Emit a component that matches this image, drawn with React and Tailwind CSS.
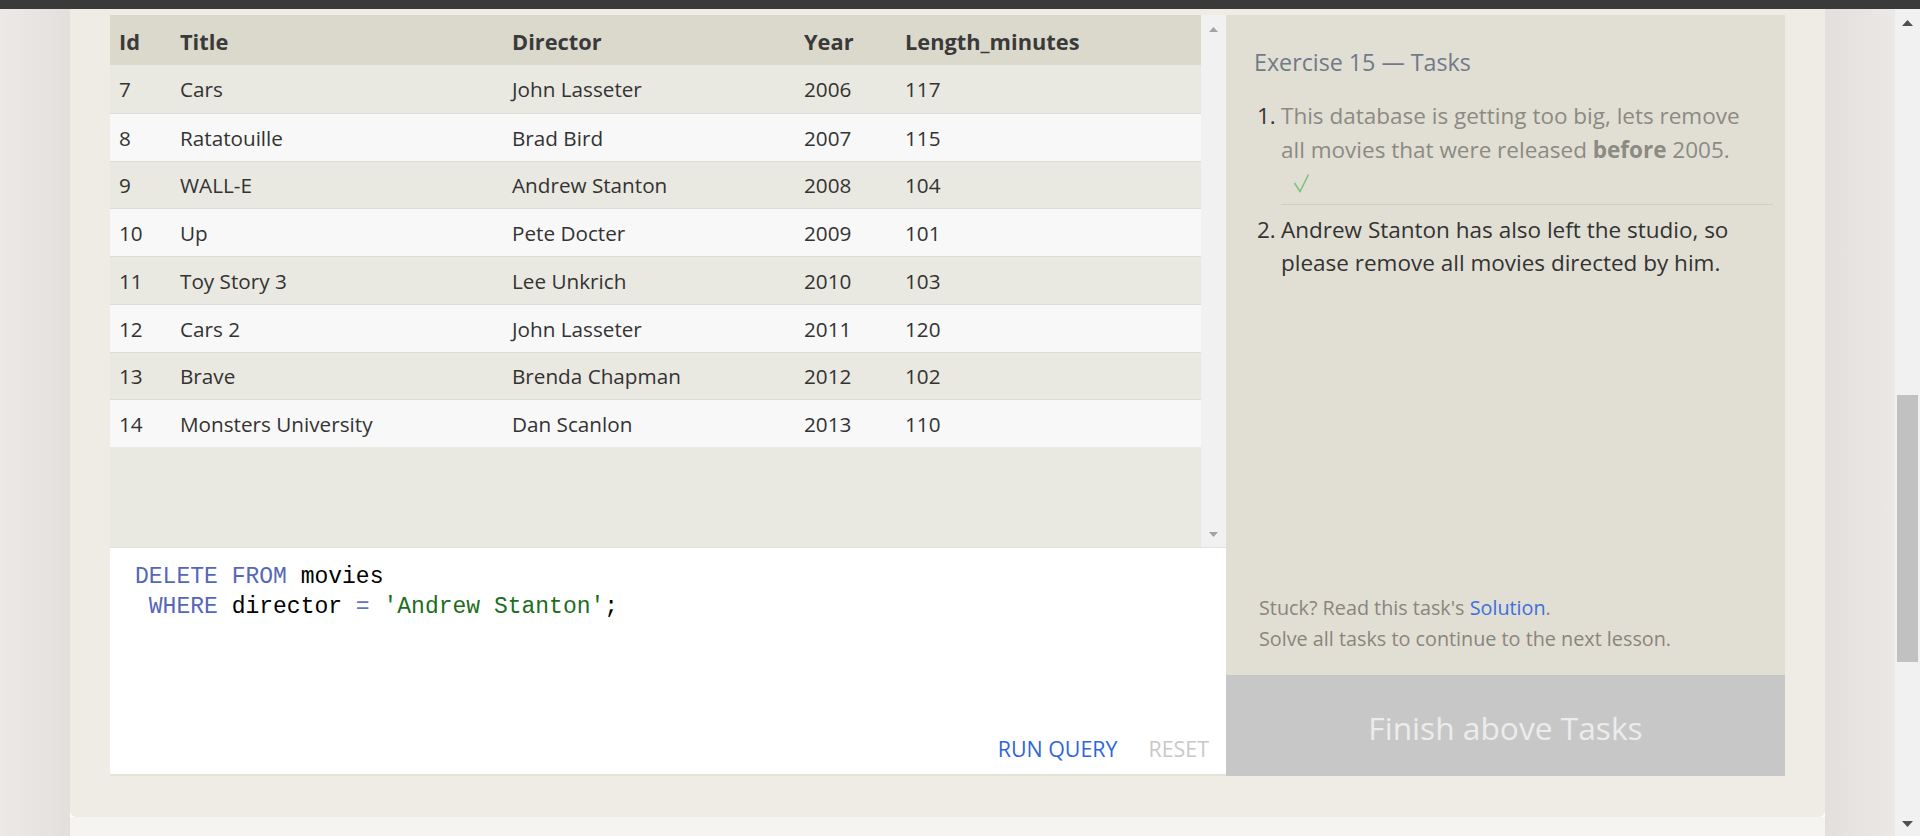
import React from "react";

const rows = [
  [7, "Cars", "John Lasseter", 2006, 117],
  [8, "Ratatouille", "Brad Bird", 2007, 115],
  [9, "WALL-E", "Andrew Stanton", 2008, 104],
  [10, "Up", "Pete Docter", 2009, 101],
  [11, "Toy Story 3", "Lee Unkrich", 2010, 103],
  [12, "Cars 2", "John Lasseter", 2011, 120],
  [13, "Brave", "Brenda Chapman", 2012, 102],
  [14, "Monsters University", "Dan Scanlon", 2013, 110],
];

function Cell({ children }) {
  return <div className="pl-[9px] whitespace-nowrap">{children}</div>;
}

function UpArrow({ color, w = 10, h = 5 }) {
  return (
    <svg width={w} height={h} viewBox={`0 0 ${w} ${h}`}>
      <polygon points={`0,${h} ${w / 2},0 ${w},${h}`} fill={color} />
    </svg>
  );
}
function DownArrow({ color, w = 10, h = 5 }) {
  return (
    <svg width={w} height={h} viewBox={`0 0 ${w} ${h}`}>
      <polygon points={`0,0 ${w},0 ${w / 2},${h}`} fill={color} />
    </svg>
  );
}

export default function App() {
  return (
    <div className="w-[1920px] h-[836px] overflow-hidden flex flex-col font-['Open_Sans',sans-serif] text-[#333333]">
      <div className="h-[9px] bg-[#3a3a3a] shrink-0" />
      <div className="flex flex-1 min-h-0">
        <div className="w-[70px] bg-linear-to-r from-[#ece9e6] to-[#e3dfdc]" />
        <div className="w-[1755px] flex flex-col">
          <div className="h-[808px] bg-[#efece5] rounded-b-[6px] px-[40px] pt-[6px] flex">
            {/* left: table + editor */}
            <div className="w-[1116px] flex flex-col">
              <div className="h-[532px] flex">
                <div className="w-[1091px] bg-[#e9e8e1] text-[20.7px]">
                  <div className="h-[50px] pt-[5px] bg-[#dad9cc] grid grid-cols-[61px_332px_292px_101px_1fr] items-center font-bold text-[21.8px] text-[#3a3a3a]">
                    <Cell>Id</Cell>
                    <Cell>Title</Cell>
                    <Cell>Director</Cell>
                    <Cell>Year</Cell>
                    <Cell>Length_minutes</Cell>
                  </div>
                  {rows.map((r, i) => (
                    <div
                      key={r[0]}
                      className={
                        "h-[47.75px] pt-[2px] grid grid-cols-[61px_332px_292px_101px_1fr] items-center " +
                        (i > 0 ? "border-t border-[#dddcd6] " : "") +
                        (i % 2 === 0 ? "bg-[#e9e8e1]" : "bg-[#f8f8f8]")
                      }
                    >
                      <Cell>{r[0]}</Cell>
                      <Cell>{r[1]}</Cell>
                      <Cell>{r[2]}</Cell>
                      <Cell>{r[3]}</Cell>
                      <Cell>{r[4]}</Cell>
                    </div>
                  ))}
                </div>
                <div className="w-[25px] bg-[#f1f1f1] flex flex-col items-center justify-between pt-[12px] pb-[10px]">
                  <UpArrow color="#a3a3a3" w={9} h={5} />
                  <DownArrow color="#a3a3a3" w={9} h={5} />
                </div>
              </div>
              <div className="h-[229px] bg-white border-t border-[#e2e1da] border-b-2 border-b-[#e4e2da] flex flex-col">
                <div className="pl-[25px] pt-[14px] font-['Liberation_Mono',monospace] text-[23px] leading-[30px] whitespace-pre text-black">
                  <div>
                    <span className="text-[#5567b8]">DELETE</span> <span className="text-[#5567b8]">FROM</span> movies
                  </div>
                  <div>
                    {" "}
                    <span className="text-[#5567b8]">WHERE</span> director <span className="text-[#5d74c4]">=</span>{" "}
                    <span className="text-[#1c6e1c]">'Andrew Stanton'</span>;
                  </div>
                </div>
                <div className="mt-auto flex justify-end gap-[31px] pr-[17px] pb-[10px] text-[21.4px] leading-[30px]">
                  <span className="text-[#2f66d9]">RUN QUERY</span>
                  <span className="text-[#c8c8c8]">RESET</span>
                </div>
              </div>
            </div>
            {/* right: tasks */}
            <div className="w-[559px] flex flex-col">
              <div className="h-[660px] bg-[#e1dfd3] flex flex-col pl-[28px] pr-[12px] pt-[32px]">
                <div className="text-[23.25px] leading-[30px] text-[#707a88]">Exercise 15 — Tasks</div>
                <div className="mt-[22px] text-[22.5px] leading-[33.6px]">
                  <div className="flex pb-[4px]">
                    <div className="w-[27px] pl-[3px] text-[#333]">1.</div>
                    <div className="flex-1 border-b border-[#d0cec2] text-[#8c8a84] whitespace-nowrap">
                      This database is getting too big, lets remove
                      <br />
                      all movies that were released <b className="font-bold">before</b> 2005.
                      <div className="h-[33.6px] pl-[12px] flex items-center">
                        <svg width="17" height="20" viewBox="0 0 17 20">
                          <polyline
                            points="1.5,10 7,18.5 15.5,1.5"
                            fill="none"
                            stroke="#7cc47c"
                            strokeWidth="1.6"
                          />
                        </svg>
                      </div>
                      <div className="h-[4px]" />
                    </div>
                  </div>
                  <div className="flex pt-[4px]">
                    <div className="w-[27px] pl-[3px] text-[#333]">2.</div>
                    <div className="flex-1 text-[#333] whitespace-nowrap">
                      Andrew Stanton has also left the studio, so
                      <br />
                      please remove all movies directed by him.
                    </div>
                  </div>
                </div>
                <div className="mt-auto pb-[21px] pl-[5px] text-[19.8px] leading-[31px] text-[#8a857d]">
                  <div>
                    Stuck? Read this task's <span className="text-[#3d6ee0]">Solution</span>.
                  </div>
                  <div>Solve all tasks to continue to the next lesson.</div>
                </div>
              </div>
              <div className="h-[101px] pt-[5px] bg-[#c7c7c7] flex items-center justify-center text-[31.7px] text-[#ececec]">
                Finish above Tasks
              </div>
            </div>
          </div>
          <div className="flex-1 bg-[#f5f4f1]" />
        </div>
        <div className="w-[70px] bg-linear-to-r from-[#e3dfdc] to-[#ebe8e5]" />
        <div className="w-[25px] bg-[#f1f1f1] flex flex-col items-center">
          <div className="pt-[11px]">
            <UpArrow color="#505050" w={11} h={6} />
          </div>
          <div className="mt-[369px] w-[21px] h-[267px] bg-[#c1c1c1]" />
          <div className="mt-auto pb-[9px]">
            <DownArrow color="#505050" w={11} h={6} />
          </div>
        </div>
      </div>
    </div>
  );
}
